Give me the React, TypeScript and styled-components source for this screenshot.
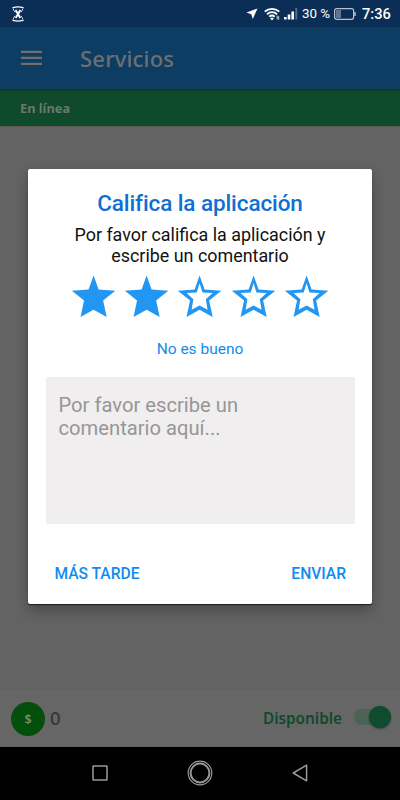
import React from 'react';
import styled, { createGlobalStyle } from 'styled-components';

const GlobalStyle = createGlobalStyle`
  * { box-sizing: border-box; }
  body { margin: 0; background: #000; font-family: Roboto, sans-serif; }
  button { border: 0; background: none; padding: 0; font: inherit; }
`;

const Screen = styled.div`
  position: relative;
  width: 400px;
  height: 800px;
  display: flex;
  flex-direction: column;
  overflow: hidden;
  background: #636363;
`;

const StatusBar = styled.div`
  height: 27px;
  flex: none;
  display: flex;
  align-items: center;
  justify-content: space-between;
  padding: 0 9px 0 12px;
  background: #0a2e55;
  color: #fff;
`;

const StatusGroup = styled.div`
  display: flex;
  align-items: center;
  height: 27px;
`;

const StatusText = styled.span<{ $size: number; $width: number; $weight: number }>`
  font-size: ${(p) => p.$size}px;
  width: ${(p) => p.$width}px;
  font-weight: ${(p) => p.$weight};
  line-height: 28px;
  white-space: nowrap;
`;

const StatusIcon = styled.svg<{ $gap: number }>`
  display: block;
  margin-right: ${(p) => p.$gap}px;
`;

const Header = styled.header`
  height: 62px;
  flex: none;
  display: flex;
  align-items: center;
  padding-left: 21px;
  background: #0d3d62;
  box-shadow: 0 1px 2px rgba(0, 0, 0, 0.3);
  z-index: 1;
`;

const PageTitle = styled.h1`
  margin: 0 0 0 38px;
  font: 500 22px/30px 'Noto Sans', sans-serif;
  letter-spacing: 0.2px;
  color: #6d6f71;
`;

const OnlineBar = styled.div`
  height: 37px;
  flex: none;
  padding-left: 20px;
  background: #0f4a2c;
  color: #6b7870;
  font: 700 12.8px/38px 'Noto Sans', sans-serif;
`;

const Content = styled.main`
  flex: 1;
  border-top: 1px solid #5a5a5a;
`;

const Footer = styled.footer`
  height: 57px;
  flex: none;
  display: flex;
  align-items: center;
  padding: 0 9px 0 11px;
  background: #666;
  border-bottom: 1px solid #5c5f60;
`;

const Coin = styled.div`
  width: 34px;
  height: 34px;
  margin-top: 1px;
  border-radius: 50%;
  background: #034f0b;
  color: #6f8f72;
  text-align: center;
  font: 600 12.5px/36px 'Noto Sans', sans-serif;
`;

const Balance = styled.span`
  margin-left: 5px;
  flex: 1;
  font: 500 18.5px/24px 'Noto Sans', sans-serif;
  color: #363636;
`;

const Availability = styled.span`
  margin-right: 12px;
  font: 600 15.3px/22px 'Noto Sans', sans-serif;
  color: #0f4a2c;
`;

const ToggleTrack = styled.div`
  width: 37px;
  height: 16px;
  display: flex;
  align-items: center;
  justify-content: flex-end;
  margin-top: -2px;
  background: #4b6254;
  border-radius: 8px;
`;

const Knob = styled.div`
  width: 22px;
  height: 22px;
  flex: none;
  border-radius: 50%;
  background: #0f4c2e;
  box-shadow: 0 1px 2px rgba(0, 0, 0, 0.4);
`;

const NavBar = styled.nav`
  height: 53px;
  flex: none;
  display: flex;
  justify-content: center;
  align-items: center;
  gap: 79px;
  padding-bottom: 1px;
  background: #000;
`;

const Overlay = styled.div`
  position: absolute;
  inset: 0;
  z-index: 2;
  padding: 169px 28px 0;
`;

const Dialog = styled.section`
  height: 435px;
  display: flex;
  flex-direction: column;
  align-items: center;
  padding: 20px 17px 0;
  border-radius: 2px;
  background: #fff;
  box-shadow: 0 1px 1px rgba(0, 0, 0, 0.65), 0 6px 14px rgba(0, 0, 0, 0.28);
`;

const DialogTitle = styled.h2`
  margin: 0;
  font-size: 22.5px;
  line-height: 28px;
  font-weight: 500;
  letter-spacing: -0.1px;
  color: #0f6fd3;
  white-space: nowrap;
`;

const Message = styled.p`
  margin: 7px 0 0;
  text-align: center;
  font-size: 17.9px;
  line-height: 21px;
  color: #111;
  white-space: nowrap;
`;

const Stars = styled.div`
  display: flex;
  margin-top: 4.5px;
`;

const StarIcon = styled.svg`
  display: block;
  width: 53.2px;
  height: 53px;
  fill: #2196f3;
`;

const RatingText = styled.p`
  margin: 15.5px 0 0;
  font-size: 15.5px;
  line-height: 20px;
  color: #108cf0;
`;

const Comment = styled.div`
  width: 309px;
  height: 147px;
  flex: none;
  margin-top: 18px;
  padding: 17px 13px;
  border-radius: 2px;
  background: #f0eeef;
  color: #979696;
  font-size: 20.2px;
  line-height: 23px;
`;

const Actions = styled.div`
  align-self: stretch;
  display: flex;
  justify-content: space-between;
  margin-top: 39px;
  padding: 0 9px 0 9.5px;
`;

const Action = styled.button`
  font-size: 15.6px;
  line-height: 22px;
  font-weight: 500;
  color: #108cf0;
`;

const starOuter = 'M12 2 14.25 8.4 21.8 8.9 16.3 13.4 17.9 20.8 12 17.6 6.100 20.8 7.700 13.400 2.200 8.900 9.750 8.400z';
const starHole = 'M12 5.600 10.700 9.700 6.100 10 9.200 12.800 8.400 17.500 12 15.600 15.600 17.500 14.800 12.800 17.900 10 13.300 9.700z';

function Star({ filled }: { filled: boolean }) {
  return (
    <StarIcon viewBox="0 0 24 24" preserveAspectRatio="none">
      <path fillRule="evenodd" d={filled ? starOuter : starOuter + starHole} />
    </StarIcon>
  );
}

export default function App() {
  return (
    <>
      <GlobalStyle />
      <Screen>
        <StatusBar>
          <StatusIcon $gap={0} width="12" height="16" viewBox="0 0 12 16" fill="none" stroke="#fff">
            <path d="M1 1.7Q6 .2 11 1.7M1 14.3Q6 15.8 11 14.3" strokeWidth="1.3" strokeLinecap="round" />
            <path d="M1.200 2.500Q1.700 5 3 6.200M10.800 2.500Q10.300 5 9 6.200M1.200 13.500Q1.700 11 3 9.800M10.800 13.500Q10.300 11 9 9.800" strokeWidth=".8" />
            <path d="M3.600 4 8.300 12M8.400 4 3.700 12" strokeWidth="1.9" />
          </StatusIcon>
          <StatusGroup>
            <StatusIcon $gap={6} width="12" height="12" viewBox="0 0 12 12" fill="#fff">
              <path d="M11.500.5.5 4.500l4.700 1.800L6.800 11z" />
            </StatusIcon>
            <StatusIcon $gap={4} width="16" height="14" viewBox="0 0 16 14" fill="none" stroke="#fff" strokeWidth="1.8">
              <path d="M.7 4.700C5 .8 11 .8 15.300 4.700M3 7.200c3-2.600 7-2.600 10 0M5.200 9.600c1.700-1.400 3.900-1.400 5.600 0" />
              <path d="M6 11.200Q8 9.900 10 11.200L8 13.500z" fill="#fff" stroke="none" />
              <path d="M13.200 8.500v4M14.700 9.200v3.500" strokeWidth=".8" />
            </StatusIcon>
            <StatusIcon $gap={4} width="14" height="13" viewBox="0 0 14 13" fill="#fff">
              <path d="M0 10h2.600v2.500H0zM3.700 7.500h2.600v5H3.700zM7.400 4.500H10v8H7.400z" />
              <path d="M11.300 1h2v11.500h-2z" opacity=".3" />
            </StatusIcon>
            <StatusText $size={13.4} $width={32} $weight={400}>30 %</StatusText>
            <StatusIcon $gap={6} width="22" height="12" viewBox="0 0 22 12" fill="none">
              <path d="M2 2h5v8H2z" fill="#60778f" />
              <rect x=".6" y=".7" width="19" height="10.600" rx="2" stroke="#b7c1cc" strokeWidth="1.200" />
              <path d="M21 4v4" stroke="#b7c1cc" strokeWidth="1.500" />
            </StatusIcon>
            <StatusText $size={14.6} $width={29} $weight={500}>7:36</StatusText>
          </StatusGroup>
        </StatusBar>

        <Header>
          <svg width="21" height="16" viewBox="0 0 21 16" fill="#6d6f71">
            <path d="M0 .7h21V3H0zM0 6.700h21V9H0zM0 12.700h21V15H0z" />
          </svg>
          <PageTitle>Servicios</PageTitle>
        </Header>
        <OnlineBar>En línea</OnlineBar>
        <Content />
        <Footer>
          <Coin>$</Coin>
          <Balance>0</Balance>
          <Availability>Disponible</Availability>
          <ToggleTrack>
            <Knob />
          </ToggleTrack>
        </Footer>
        <NavBar>
          <svg width="16" height="16" viewBox="0 0 16 16" fill="none" stroke="#999" strokeWidth="1.500">
            <rect x="1" y="1" width="14" height="14" rx=".5" />
          </svg>
          <svg width="26" height="26" viewBox="0 0 26 26" fill="none" stroke="#999">
            <circle cx="13" cy="13" r="11.800" strokeWidth="1.200" />
            <circle cx="13" cy="13" r="9.400" strokeWidth="2" />
          </svg>
          <svg width="16" height="18" viewBox="0 0 16 18" fill="none" stroke="#999" strokeWidth="1.500" strokeLinejoin="round">
            <path d="M14.600 1.200v15.600L1.200 9z" />
          </svg>
        </NavBar>

        <Overlay>
          <Dialog>
            <DialogTitle>Califica la aplicación</DialogTitle>
            <Message>
              Por favor califica la aplicación y<br />escribe un comentario
            </Message>
            <Stars>
              {[1, 2, 3, 4, 5].map((n) => (
                <Star key={n} filled={n <= 2} />
              ))}
            </Stars>
            <RatingText>No es bueno</RatingText>
            <Comment>
              Por favor escribe un<br />comentario aquí...
            </Comment>
            <Actions>
              <Action>MÁS TARDE</Action>
              <Action>ENVIAR</Action>
            </Actions>
          </Dialog>
        </Overlay>
      </Screen>
    </>
  );
}
